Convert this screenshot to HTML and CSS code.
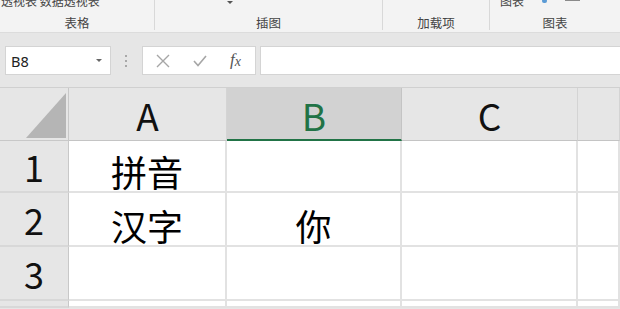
FILE: index.html
```html
<!DOCTYPE html>
<html>
<head>
	<meta charset="utf-8">
	<title>Sheet</title>
	<link rel="stylesheet" href="styles.css">
</head>
<body>
	<div class="ribbon">
		<div class="group g-table">
			<div class="tools">透视表 数据透视表</div>
			<div class="label">表格</div>
		</div>
		<div class="group g-pic">
			<div class="tools"><span class="caret"></span></div>
			<div class="label">插图</div>
		</div>
		<div class="group g-addin">
			<div class="tools"></div>
			<div class="label">加载项</div>
		</div>
		<div class="group g-chart">
			<div class="tools">图表<span class="dot"></span><span class="sq"></span></div>
			<div class="label">图表</div>
		</div>
	</div>

	<div class="formula-bar">
		<div class="name-box">
			<span>B8</span>
			<span class="arrow"></span>
		</div>
		<div class="dots"><i></i><i></i><i></i></div>
		<div class="fx-buttons">
			<svg width="14" height="14" viewBox="0 0 14 14"><path d="M1 1 L13 13 M13 1 L1 13" stroke="#a6a6a6" stroke-width="1.4" fill="none"/></svg>
			<svg width="14" height="12" viewBox="0 0 14 12"><path d="M1 6 L5 10.5 L13 1" stroke="#a6a6a6" stroke-width="1.6" fill="none"/></svg>
			<span class="fx">f<span class="x">x</span></span>
		</div>
		<div class="formula-input"></div>
	</div>

	<div class="sheet">
		<div class="corner"><span class="tri"></span></div>
		<div class="col-head">A</div>
		<div class="col-head selected">B</div>
		<div class="col-head">C</div>
		<div class="col-head"></div>

		<div class="row-head">1</div>
		<div class="cell">拼音</div>
		<div class="cell"></div>
		<div class="cell"></div>
		<div class="cell"></div>

		<div class="row-head">2</div>
		<div class="cell">汉字</div>
		<div class="cell">你</div>
		<div class="cell"></div>
		<div class="cell"></div>

		<div class="row-head">3</div>
		<div class="cell"></div>
		<div class="cell"></div>
		<div class="cell"></div>
		<div class="cell"></div>

		<div class="row-head"></div>
		<div class="cell"></div>
		<div class="cell"></div>
		<div class="cell"></div>
		<div class="cell"></div>
	</div>
</body>
</html>
```

FILE: styles.css
```css
body {
	margin: 0;
	width: 620px;
	height: 309px;
	overflow: hidden;
	background-color: #e6e6e6;
	font-family: "Noto Sans CJK SC", "Noto Sans", sans-serif;
	color: #000;
}
.ribbon {
	display: flex;
	height: 33px;
	box-sizing: border-box;
	background-color: #f3f3f3;
	border-bottom: 1px solid #dcdcdc;
	overflow: hidden;
}
.group {
	display: flex;
	flex-direction: column;
	justify-content: space-between;
	height: 30px;
	border-right: 1px solid #d8d8d8;
	box-sizing: border-box;
}
.g-table { width: 155px; }
.g-pic { width: 228px; }
.g-addin { width: 107px; }
.g-chart { width: 130px; border-right: none; }
.tools {
	margin-top: -7px;
	height: 15px;
	font-size: 12px;
	line-height: 15px;
	color: #444;
	white-space: nowrap;
	display: flex;
	align-items: flex-start;
}
.g-table .tools { padding-left: 1px; }
.g-pic .tools { padding-left: 72px; }
.g-chart .tools { padding-left: 10px; }
.caret {
	margin-top: 8px;
	width: 0;
	height: 0;
	border-left: 3px solid transparent;
	border-right: 3px solid transparent;
	border-top: 3px solid #555;
}
.dot {
	margin: 6px 0 0 18px;
	width: 5px;
	height: 4px;
	background-color: #5b9bd5;
	border-radius: 2px;
}
.sq {
	margin: 5px 0 0 18px;
	width: 15px;
	height: 3px;
	background-color: #8a8a8a;
}
.label {
	text-align: center;
	font-size: 12.5px;
	line-height: 14px;
	color: #444;
}
.formula-bar {
	display: flex;
	align-items: center;
	height: 29px;
	padding: 13px 0 12px 5px;
}
.name-box {
	display: flex;
	align-items: center;
	justify-content: space-between;
	width: 106px;
	height: 29px;
	box-sizing: border-box;
	padding: 0 8px 0 5px;
	background-color: #fff;
	border: 1px solid #d4d4d4;
	font-family: "Noto Sans", sans-serif;
	font-size: 14.5px;
	color: #222;
}
.arrow {
	width: 0;
	height: 0;
	border-left: 3px solid transparent;
	border-right: 3px solid transparent;
	border-top: 3px solid #666;
}
.dots {
	display: flex;
	flex-direction: column;
	gap: 3px;
	margin: 0 15px 0 14px;
}
.dots i {
	width: 2px;
	height: 2px;
	background-color: #a8a8a8;
}
.fx-buttons {
	display: flex;
	align-items: center;
	width: 114px;
	height: 29px;
	box-sizing: border-box;
	padding: 0 10px 0 13px;
	gap: 23px;
	background-color: #fff;
	border: 1px solid #d4d4d4;
}
.fx {
	font-family: "Liberation Serif", serif;
	font-style: italic;
	font-size: 17px;
	color: #555;
	line-height: 16px;
}
.fx .x {
	font-size: 14px;
	position: relative;
	top: 1px;
}
.formula-input {
	flex: 1;
	height: 29px;
	margin-left: 4px;
	box-sizing: border-box;
	background-color: #fff;
	border: 1px solid #d4d4d4;
	border-right: none;
}
.sheet {
	display: grid;
	grid-template-columns: 69px 158px 175px 176px 1fr;
	grid-template-rows: 53px 52px 54px 54px 7px;
	background-color: #fff;
	border-top: 1px solid #d0d0d0;
}
.corner {
	display: flex;
	align-items: flex-end;
	justify-content: flex-end;
	padding: 0 2px 2px 0;
	background-color: #e6e6e6;
	border-right: 1px solid #c8c8c8;
	border-bottom: 1px solid #c8c8c8;
}
.tri {
	width: 0;
	height: 0;
	border-left: 40px solid transparent;
	border-bottom: 45px solid #b5b5b5;
}
.col-head {
	display: flex;
	align-items: center;
	justify-content: center;
	background-color: #e6e6e6;
	border-right: 1px solid #d4d4d4;
	border-bottom: 1px solid #c4c4c4;
	font-size: 37px;
	line-height: 1;
	color: #111;
	padding-top: 3px;
	box-sizing: border-box;
}
.col-head.selected {
	background-color: #d2d2d2;
	color: #217346;
	border-bottom: 2px solid #217346;
	border-right: 1px solid #c4c4c4;
}
.row-head {
	display: flex;
	align-items: center;
	justify-content: center;
	background-color: #e6e6e6;
	border-right: 1px solid #c8c8c8;
	border-bottom: 2px solid #d8d8d8;
	font-size: 36px;
	line-height: 1;
	color: #111;
}
.cell {
	display: flex;
	align-items: flex-end;
	justify-content: center;
	padding-bottom: 2px;
	border-right: 2px solid #e2e2e2;
	border-bottom: 2px solid #e2e2e2;
	font-size: 36px;
	line-height: 1;
}
```
